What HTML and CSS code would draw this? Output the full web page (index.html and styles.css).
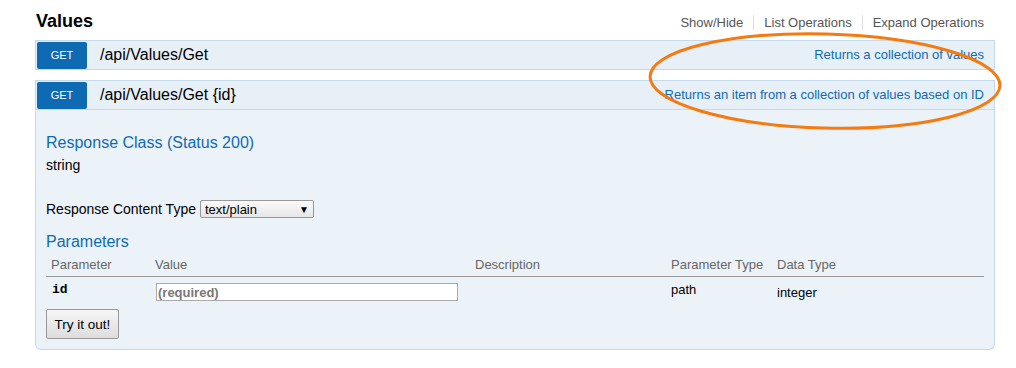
FILE: index.html
```html
<!DOCTYPE html>
<html lang="en">
<head>
    <meta charset="UTF-8">
    <title>Values API</title>
    <link rel="stylesheet" href="styles.css">
</head>
<body>

<div class="resource">
    <div class="resource-heading">
        <h2>Values</h2>
        <ul class="options">
            <li>Show/Hide</li>
            <li>List Operations</li>
            <li>Expand Operations</li>
        </ul>
    </div>

    <div class="operation">
        <div class="heading">
            <span class="method">GET</span>
            <span class="path">/api/Values/Get</span>
            <span class="summary">Returns a collection of values</span>
        </div>
    </div>

    <div class="operation">
        <div class="heading">
            <span class="method">GET</span>
            <span class="path">/api/Values/Get {id}</span>
            <span class="summary">Returns an item from a collection of values based on ID</span>
        </div>
        <div class="content">
            <h4>Response Class (Status 200)</h4>
            <div class="model">string</div>

            <div class="content-type">
                <label for="ctype">Response Content Type</label>
                <div class="select" id="ctype">text/plain<span class="arrow">&#9660;</span></div>
            </div>

            <h4 class="params-title">Parameters</h4>
            <table class="params">
                <thead>
                    <tr>
                        <th class="col-name">Parameter</th>
                        <th class="col-value">Value</th>
                        <th class="col-desc">Description</th>
                        <th class="col-ptype">Parameter Type</th>
                        <th class="col-dtype">Data Type</th>
                    </tr>
                </thead>
                <tbody>
                    <tr>
                        <td class="code">id</td>
                        <td><input type="text" class="required" placeholder="(required)"></td>
                        <td></td>
                        <td class="ptype">path</td>
                        <td class="dtype">integer</td>
                    </tr>
                </tbody>
            </table>
            <button class="submit">Try it out!</button>
        </div>
    </div>
</div>

<svg class="annotation" width="1016" height="368" viewBox="0 0 1016 368">
    <ellipse cx="825" cy="81" rx="175" ry="47" fill="none" stroke="#f57a10" stroke-width="3" transform="rotate(1.5 825 81)"/>
</svg>

</body>
</html>
```

FILE: styles.css
```css
body {
    margin: 0;
    font-family: "Liberation Sans", Arial, sans-serif;
    font-size: 13px;
    color: #000;
    background-color: #fff;
}
.resource {
    width: 960px;
    margin-left: 35px;
}
.resource-heading {
    display: flex;
    justify-content: space-between;
    align-items: flex-end;
    height: 32px;
    padding-bottom: 8px;
}
.resource-heading h2 {
    margin: 0 0 0 1px;
    font-size: 18px;
    line-height: 22px;
    font-weight: bold;
}
.options {
    list-style: none;
    margin: 0 11px 2px 0;
    padding: 0;
    display: flex;
    height: 15px;
}
.options li {
    color: #555;
    padding: 0 10px;
    border-right: 1px solid #ddd;
    line-height: 15px;
}
.options li:last-child {
    border-right: none;
    padding-right: 0;
}
.operation {
    margin-bottom: 10px;
}
.heading {
    display: flex;
    align-items: center;
    height: 28px;
    background-color: #e7f0f7;
    border: 1px solid #c3d9ec;
}
.method {
    width: 50px;
    height: 27px;
    margin-left: 1px;
    background-color: #0f6ab4;
    color: #fff;
    font-size: 11px;
    line-height: 27px;
    text-align: center;
    border-radius: 2px;
}
.path {
    margin-left: 13px;
    font-size: 16px;
}
.summary {
    margin-left: auto;
    margin-right: 10px;
    margin-bottom: 2px;
    color: #0f6ab4;
}
.content {
    background-color: #ebf3f9;
    border: 1px solid #c3d9ec;
    border-top: none;
    border-radius: 0 0 6px 6px;
    padding: 23px 10px 10px;
}
.content h4 {
    margin: 0;
    color: #0f6ab4;
    font-size: 16px;
    font-weight: normal;
    line-height: 20px;
}
.model {
    font-size: 14px;
    line-height: 18px;
    margin-top: 3px;
}
.content-type {
    display: flex;
    align-items: center;
    margin-top: 26px;
    font-size: 14px;
}
.select {
    display: flex;
    justify-content: space-between;
    align-items: center;
    width: 104px;
    height: 16px;
    margin-left: 4px;
    padding: 0 4px;
    border: 1px solid #999;
    border-radius: 2px;
    background: linear-gradient(#fafafa, #e6e6e6);
    font-size: 13px;
}
.arrow {
    font-size: 10px;
}
.params-title {
    margin-top: 14px !important;
}
.params {
    width: 938px;
    border-collapse: collapse;
    margin-top: 0;
}
.params th {
    text-align: left;
    font-weight: normal;
    color: #666;
    padding: 5px 5px 3px;
    line-height: 16px;
    border-bottom: 1px solid #999;
}
.col-name { width: 94px; }
.col-value { width: 310px; }
.col-desc { width: 186px; }
.col-ptype { width: 96px; }
.params td {
    vertical-align: top;
    padding: 6px 5px 4px;
    line-height: 16px;
}
.params td.code {
    font-family: "Liberation Mono", "Courier New", monospace;
    font-weight: bold;
    padding-top: 5px;
    padding-left: 6px;
}
.params td.ptype {
    padding-top: 5px;
}
.params td.dtype {
    padding-top: 8px;
}
input.required {
    box-sizing: border-box;
    width: 302px;
    height: 18px;
    margin: 0 0 0 1px;
    padding: 0 1px;
    border: 1px solid #aaa;
    font-family: "Liberation Sans", Arial, sans-serif;
    font-size: 13px;
    font-weight: bold;
    background-color: #fff;
}
input.required::placeholder {
    color: #777;
}
.submit {
    display: block;
    width: 73px;
    height: 30px;
    margin-top: 4px;
    padding: 0;
    font-family: "Liberation Sans", Arial, sans-serif;
    font-size: 13.5px;
    color: #000;
    background: linear-gradient(#f6f6f6, #dddddd);
    border: 1px solid #999;
    border-radius: 2px;
}
.annotation {
    position: absolute;
    left: 0;
    top: 0;
    pointer-events: none;
}
```
